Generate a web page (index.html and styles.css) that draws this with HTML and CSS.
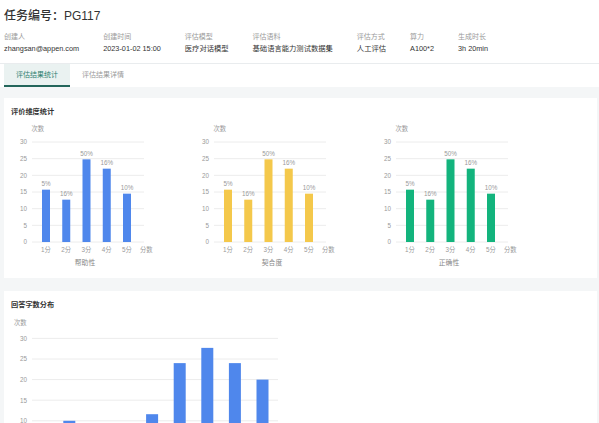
FILE: index.html
```html
<!DOCTYPE html>
<html lang="zh-CN">
<head>
    <meta charset="UTF-8">
    <meta name="viewport" content="width=device-width, initial-scale=1.0">
    <title>任务编号：PG117</title>
    <link rel="stylesheet" href="styles.css">
</head>
<body>
    <div class="task-header">
        <h1>任务编号：PG117</h1>
        <div class="task-meta">
            <div class="meta-item"><span class="meta-label">创建人</span><span class="meta-value">zhangsan@appen.com</span></div>
            <div class="meta-item"><span class="meta-label">创建时间</span><span class="meta-value">2023-01-02 15:00</span></div>
            <div class="meta-item"><span class="meta-label">评估模型</span><span class="meta-value">医疗对话模型</span></div>
            <div class="meta-item"><span class="meta-label">评估语料</span><span class="meta-value">基础语言能力测试数据集</span></div>
            <div class="meta-item"><span class="meta-label">评估方式</span><span class="meta-value">人工评估</span></div>
            <div class="meta-item"><span class="meta-label">算力</span><span class="meta-value">A100*2</span></div>
            <div class="meta-item"><span class="meta-label">生成时长</span><span class="meta-value">3h 20min</span></div>
        </div>
    </div>

    <div class="tabs">
        <div class="tab active">评估结果统计</div>
        <div class="tab">评估结果详情</div>
    </div>

    <div class="content">
        <div class="card">
            <h3>评价维度统计</h3>
            <div class="chart-row" id="dimension-charts"></div>
        </div>
        <div class="card">
            <h3>回答字数分布</h3>
            <div id="length-chart"></div>
        </div>
    </div>

    <script>
        const scores = [15.7, 12.7, 24.8, 22, 14.5];
        const percents = ['5%', '16%', '50%', '16%', '10%'];
        const dimensions = [
            { name: '帮助性', color: '#4f87ec', nameX: 74 },
            { name: '契合度', color: '#f4c84b', nameX: 79 },
            { name: '正确性', color: '#13b47d', nameX: 74 }
        ];

        function text(x, y, str, anchor) {
            return `<text x="${x}" y="${y}" text-anchor="${anchor || 'middle'}">${str}</text>`;
        }

        // small bar chart for each dimension
        function dimensionChart(dim) {
            let svg = `<svg class="chart" width="182" height="148">`;
            svg += text(20.5, 9.3, '次数', 'start');
            for (let v = 0; v <= 30; v += 5) {
                const y = 120 - v / 30 * 100;
                svg += `<line x1="21" x2="133" y1="${y}" y2="${y}" class="grid"/>`;
                svg += text(16, y + 2.3, v, 'end');
            }
            scores.forEach((v, i) => {
                const x = 31 + i * 20.25;
                const h = v / 30 * 100;
                svg += `<rect x="${x}" y="${120 - h}" width="8" height="${h}" fill="${dim.color}"/>`;
                svg += text(x + 4, 120 - h - 3.5, percents[i]);
                svg += text(x + 4, 129.5, (i + 1) + '分');
            });
            svg += text(129, 129.5, '分数', 'start');
            svg += `<text x="${dim.nameX}" y="142.5" text-anchor="middle" class="axis-name">${dim.name}</text>`;
            return svg + '</svg>';
        }

        document.getElementById('dimension-charts').innerHTML = dimensions.map(dimensionChart).join('');

        // answer length distribution
        const lengths = [10, 5, 8, 11.6, 24, 27.7, 24, 20];
        let svg = `<svg class="chart" width="290" height="150">`;
        svg += text(3, 10.3, '次数', 'start');
        for (let v = 10; v <= 30; v += 5) {
            const y = 147 - v * 4.12;
            svg += `<line x1="21" x2="267" y1="${y}" y2="${y}" class="grid"/>`;
            svg += text(16, y + 2.3, v, 'end');
        }
        lengths.forEach((v, i) => {
            const x = 52.3 + i * 27.6;
            const h = v * 4.12;
            svg += `<rect x="${x}" y="${147 - h}" width="12" height="${h}" fill="#4f87ec"/>`;
        });
        document.getElementById('length-chart').innerHTML = svg + '</svg>';
    </script>
</body>
</html>
```

FILE: styles.css
```css
body {
    margin: 0;
    font-family: "Liberation Sans", "Noto Sans CJK SC", sans-serif;
    color: #333;
    background: #fff;
}
.task-header {
    padding: 8px 4px 8px;
    border-bottom: 1px solid #e9ecee;
}
h1 {
    margin: 0;
    font-size: 12px;
    line-height: 17px;
    font-weight: 500;
    color: #333;
}
.task-meta {
    display: flex;
    gap: 24px;
    margin-top: 6px;
}
.meta-item {
    display: flex;
    flex-direction: column;
}
.meta-label {
    font-size: 7px;
    line-height: 12px;
    color: #9a9a9a;
}
.meta-value {
    font-size: 7.3px;
    line-height: 12px;
    color: #333;
}
.tabs {
    display: flex;
    padding: 0 4px;
    height: 23px;
}
.tab {
    width: 66px;
    box-sizing: border-box;
    font-size: 7px;
    line-height: 21px;
    text-align: center;
    color: #999;
    border-bottom: 2px solid transparent;
}
.tab.active {
    background: #eaf2f1;
    color: #2d7e6e;
    border-bottom-color: #23665b;
}
.content {
    background: #f4f6f7;
    padding: 11px 2px 20px 4px;
}
.card {
    background: #fff;
    padding: 8px 7px 8px;
    margin-bottom: 13px;
}
.card h3 {
    margin: 0 0 4px;
    font-size: 7.2px;
    line-height: 12px;
    font-weight: 700;
    color: #333;
}
.chart-row {
    display: flex;
}
.chart {
    display: block;
    font-family: "Liberation Sans", "Noto Sans CJK SC", sans-serif;
    font-size: 6.3px;
    fill: #9a9a9a;
}
.chart .grid {
    stroke: #ececec;
    stroke-width: 1;
}
.chart .axis-name {
    font-size: 6.8px;
    fill: #888;
}
```
